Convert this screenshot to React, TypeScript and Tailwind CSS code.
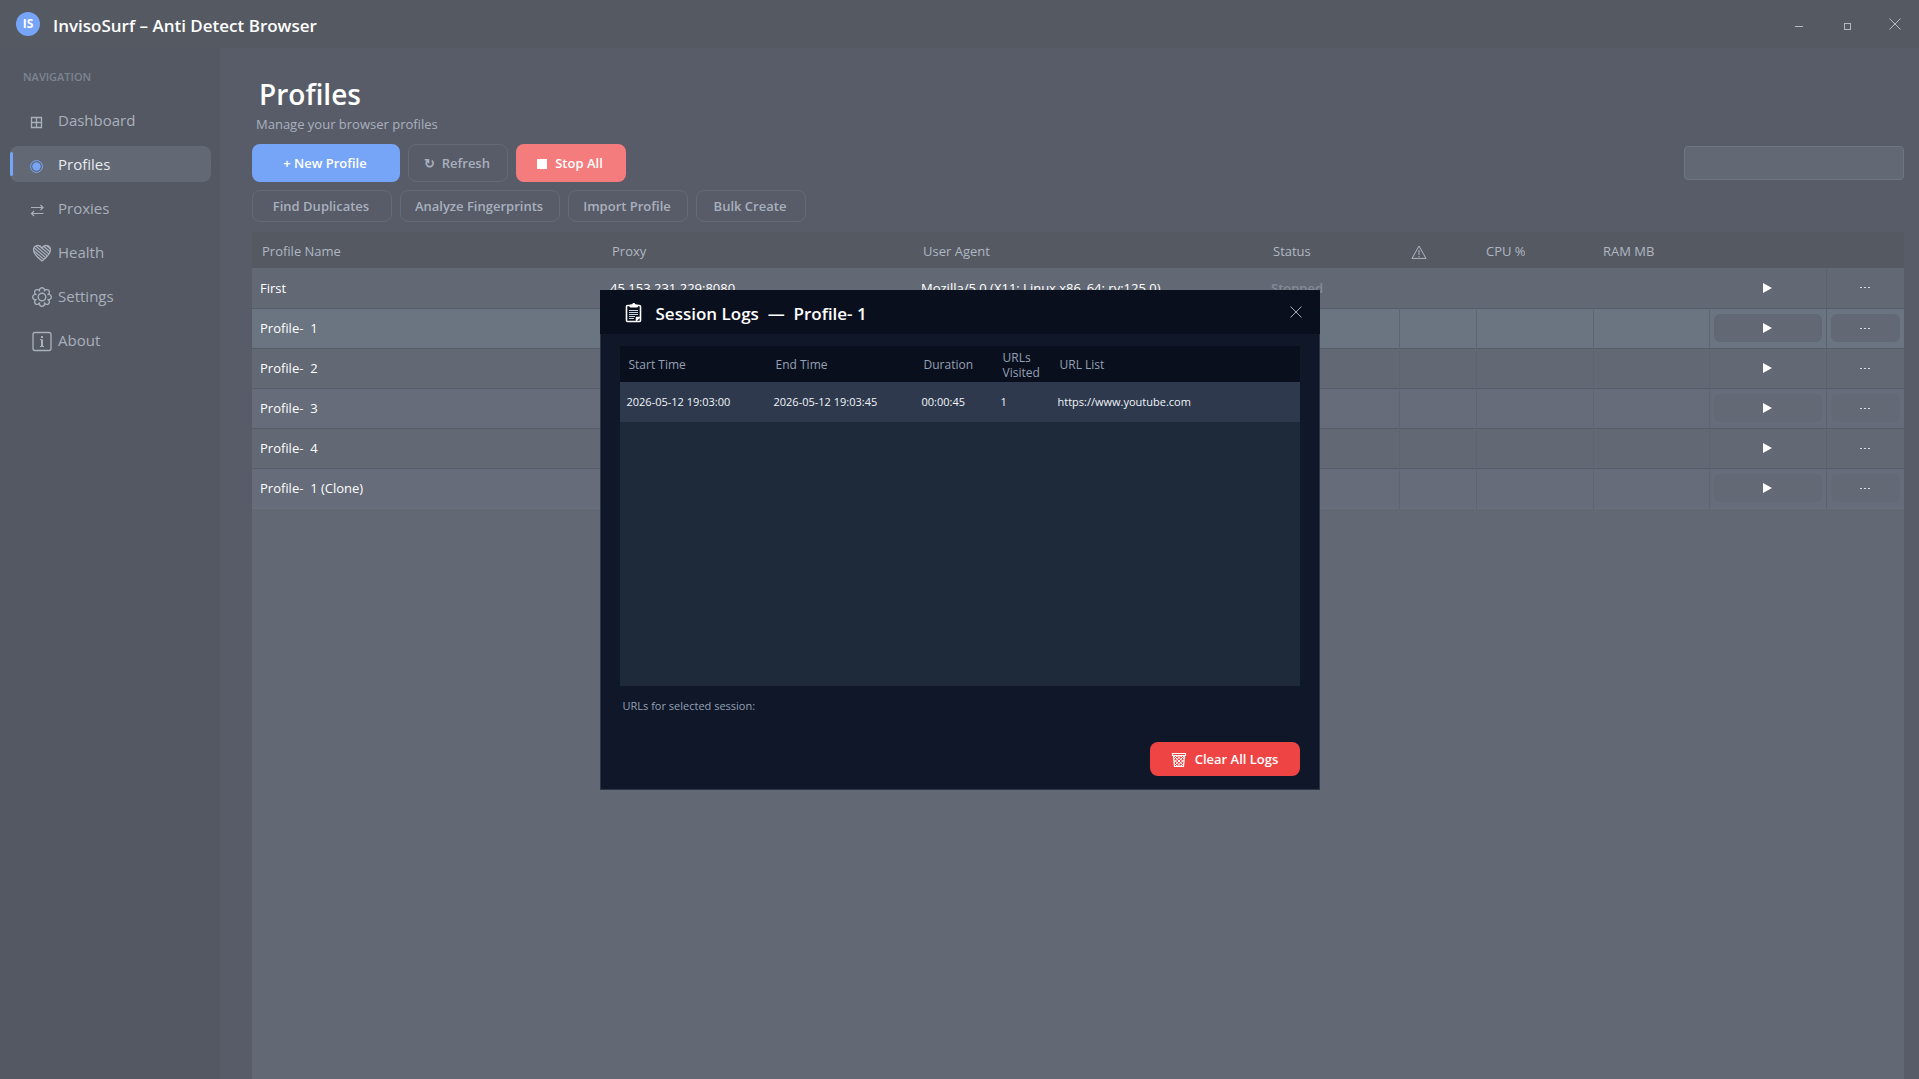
import React from "react";

const font = "font-['Open_Sans','Noto_Sans',sans-serif]";

const navItems = [
  { label: "Dashboard", icon: <GridIcon /> },
  { label: "Profiles", icon: <TargetIcon />, active: true },
  { label: "Proxies", icon: <SwapIcon /> },
  { label: "Health", icon: <HeartIcon /> },
  { label: "Settings", icon: <GearIcon /> },
  { label: "About", icon: <InfoIcon /> },
];

const profiles = [
  { name: "First", proxy: "45.153.231.229:8080", agent: "Mozilla/5.0 (X11; Linux x86_64; rv:125.0)", status: "Stopped" },
  { name: "Profile-  1", proxy: "", agent: "", status: "", selected: true },
  { name: "Profile-  2", proxy: "", agent: "", status: "" },
  { name: "Profile-  3", proxy: "", agent: "", status: "" },
  { name: "Profile-  4", proxy: "", agent: "", status: "" },
  { name: "Profile-  1 (Clone)", proxy: "", agent: "", status: "" },
];

function GridIcon() {
  return (
    <svg viewBox="0 0 24 24" className="size-6" fill="none" stroke="currentColor" strokeWidth="1.300">
      <path d="M6.500 9.500h10v10h-10zM11.500 9.500v10M6.500 14.500h10" />
    </svg>
  );
}

function TargetIcon() {
  return (
    <svg viewBox="0 0 24 24" className="size-6" fill="none" stroke="currentColor">
      <circle cx="11.500" cy="14.500" r="6" />
      <circle cx="11.500" cy="14.500" r="4.200" fill="currentColor" stroke="none" />
    </svg>
  );
}

function SwapIcon() {
  return (
    <svg viewBox="0 0 24 24" className="size-6" fill="none" stroke="currentColor" strokeWidth="1.200">
      <path d="M6 11.500h12M15.500 9l2.500 2.500-2.500 2.500M18.500 17.500h-12M9 15l-2.500 2.500L9 20" />
    </svg>
  );
}

function HeartIcon() {
  const heart = "M17 21C12 17 8.500 14 8.500 10 8.500 5 14.800 4 17 8c2.200-4 8.500-3 8.500 2 0 4-3.500 7-8.500 11z";
  return (
    <svg viewBox="0 0 24 24" className="size-6 overflow-visible" fill="none" stroke="currentColor">
      <defs>
        <clipPath id="heart">
          <path d={heart} />
        </clipPath>
      </defs>
      <path d={heart} strokeWidth="1.300" />
      <path
        clipPath="url(#heart)"
        d="M2 5l20 17M4 3.500l20 17M6 2l20 17M8 .5l20 17M10-1l20 17M0 6.500l20 17M12-2.500l20 17"
        strokeWidth="1.200"
      />
    </svg>
  );
}

function GearIcon() {
  return (
    <svg viewBox="0 0 24 24" className="size-6 overflow-visible" fill="none" stroke="currentColor" strokeWidth="1.400">
      <g transform="translate(17 13)">
        <path d="M-2.300-5.500a2.600 2.600 0 1 1 4.600 0a2.600 2.600 0 1 1 3.200 3.200a2.600 2.600 0 1 1 0 4.600a2.600 2.600 0 1 1-3.200 3.200a2.600 2.600 0 1 1-4.600 0a2.600 2.600 0 1 1-3.200-3.200a2.600 2.600 0 1 1 0-4.600a2.600 2.600 0 1 1 3.200-3.200z" />
        <circle r="3.800" />
      </g>
    </svg>
  );
}

function InfoIcon() {
  return (
    <svg viewBox="0 0 24 24" className="size-6 overflow-visible" fill="none" stroke="currentColor" strokeWidth="1.300">
      <rect x="8" y="4.500" width="18" height="18" rx="2" />
      <path d="M17 11.500v7M17 8v2" strokeWidth="2" />
      <path d="M15 11.700h2M15 18.500h4" strokeWidth="1" />
    </svg>
  );
}

function CloseIcon() {
  return (
    <svg viewBox="0 0 12 12" className="size-3" fill="none" stroke="currentColor">
      <path d="M.5.5l11 11M11.500.5l-11 11" />
    </svg>
  );
}

function ClipboardIcon() {
  return (
    <svg viewBox="0 0 18 20" className="h-5 w-[18px] overflow-visible" fill="none" stroke="#fff">
      <g transform="translate(1 1)">
        <rect x="1.500" y="2.500" width="14" height="16" rx="1" strokeWidth="1.600" />
        <path d="M5 4V2h2l1-1.500h1.500l1 1.500h2v2z" fill="#fff" />
        <path d="M4 7.500h9M4 9.500h9M4 11.500h9M4 13.500h6M4 15.500h5" stroke="#cbd5e1" />
        <path d="M15.500 14l-4.500 4.500V14z" fill="#fff" strokeWidth=".5" />
      </g>
    </svg>
  );
}

function TrashIcon() {
  return (
    <svg viewBox="0 0 16 16" className="size-4" fill="none" stroke="currentColor">
      <path d="M1.500 1.500h13v2h-13zM2.500 3.500l1 11h9l1-11" strokeWidth="1.200" />
      <path d="M3 4l9.500 9.500M6.500 4l6.500 6.500M3.500 8l6 6M3.500 11.500l2.500 2.500M10 4l3 3M13 4l-9.500 9.500M9.500 4L3 10.500M12.500 8l-6 6M12.500 11.500L10 14M6 4L3 7" strokeWidth="1" />
    </svg>
  );
}

function ToolButton({ children, className }: { children: React.ReactNode; className: string }) {
  return (
    <button className={`flex items-center justify-center rounded-lg pt-0.5 pr-0.5 text-[13px] font-semibold whitespace-pre ${className}`}>
      {children}
    </button>
  );
}

const ghost = "border border-[#656a77] text-[#a9b0bd]";

export default function App() {
  return (
    <div className={`relative flex h-screen flex-col overflow-hidden bg-[#585c69] text-white ${font}`}>
      <header className="flex h-12 shrink-0 items-center bg-[#555962] pr-[18px] pl-4">
        <span className="flex size-6 items-center justify-center rounded-full bg-[#76a5f8] text-xs font-bold">IS</span>
        <h1 className="ml-[13px] pt-1 text-[17px] font-semibold">InvisoSurf – Anti Detect Browser</h1>
        <div className="ml-auto flex items-center gap-9 text-[#b3b8c2]">
          <button aria-label="Minimize" className="flex size-3 items-center justify-center pt-1">
            <span className="h-px w-2 bg-current" />
          </button>
          <button aria-label="Maximize" className="flex size-3 items-center justify-center pt-1">
            <span className="size-[7px] shrink-0 border border-current" />
          </button>
          <button aria-label="Close">
            <CloseIcon />
          </button>
        </div>
      </header>

      <div className="flex min-h-0 flex-1">
        <aside className="w-[220px] shrink-0 bg-[#545862] pt-5">
          <h2 className="mb-4 pl-[23px] text-[11px] leading-[18px] font-semibold text-[#7e8491]">NAVIGATION</h2>
          <nav className="flex flex-col gap-2 pr-[9px] pl-[10px]">
            {navItems.map((item) => (
              <a
                key={item.label}
                href="#"
                className={`relative flex h-9 items-center rounded-lg text-[15px] ${item.active ? "bg-[#626874] text-[#e8ebef]" : "text-[#a9b0bd]"}`}
              >
                {item.active && <span className="absolute top-1.5 left-0 h-6 w-[3px] rounded-sm bg-[#76a5f8]" />}
                <span className={`ml-[15px] ${item.active ? "text-[#76a5f8]" : ""}`}>{item.icon}</span>
                <span className="ml-[9px]">{item.label}</span>
              </a>
            ))}
          </nav>
        </aside>

        <main className="flex min-w-0 flex-1 flex-col pt-6 pr-[15px] pl-8">
          <h2 className="pt-0.5 pl-[7px] text-[28px] leading-10 font-semibold">Profiles</h2>
          <p className="pl-1 text-[13px] leading-5 text-[#a9b0bd]">Manage your browser profiles</p>

          <div className="mt-[10px] flex items-center gap-2">
            <ToolButton className="h-[38px] w-[148px] bg-[#76a5f8]">+ New Profile</ToolButton>
            <ToolButton className={`h-[38px] w-[100px] ${ghost}`}>↻  Refresh</ToolButton>
            <ToolButton className="h-[38px] w-[110px] bg-[#f47c7c]">
              <span className="mr-2 size-[10px] bg-white" />
              Stop All
            </ToolButton>
            <input aria-label="Search profiles" className="ml-auto h-[34px] w-[220px] rounded border border-[#6f7683] bg-[#626874] px-2 text-sm" />
          </div>
          <div className="mt-2 flex gap-2">
            <ToolButton className={`h-8 w-[140px] ${ghost}`}>Find Duplicates</ToolButton>
            <ToolButton className={`h-8 w-[160px] ${ghost}`}>Analyze Fingerprints</ToolButton>
            <ToolButton className={`h-8 w-[120px] ${ghost}`}>Import Profile</ToolButton>
            <ToolButton className={`h-8 w-[110px] ${ghost}`}>Bulk Create</ToolButton>
          </div>

          <div className="mt-[10px] min-h-0 flex-1 bg-[#626874]">
            <table className="w-full table-fixed border-collapse text-left text-[13px]">
              <colgroup>
                <col />
                <col className="w-[311px]" />
                <col className="w-[350px]" />
                <col className="w-[136px]" />
                <col className="w-[77px]" />
                <col className="w-[117px]" />
                <col className="w-[116px]" />
                <col className="w-[117px]" />
                <col className="w-[78px]" />
              </colgroup>
              <thead>
                <tr className="h-9 bg-[#555962] text-[#b0b7c3]">
                  <th className="px-[10px] pt-[3px] font-normal">Profile Name</th>
                  <th className="px-[10px] pt-[3px] font-normal">Proxy</th>
                  <th className="px-[10px] pt-[3px] font-normal">User Agent</th>
                  <th className="px-[10px] pt-[3px] font-normal">Status</th>
                  <th className="px-3 pt-[3px] font-normal">
                    <svg viewBox="0 0 16 14" className="h-[14px] w-4" fill="none" stroke="currentColor" role="img" aria-label="Warnings">
                      <path d="M8 1L15 13.400H1zM8 5v5M8 11v1" />
                    </svg>
                  </th>
                  <th className="px-[10px] pt-[3px] font-normal">CPU %</th>
                  <th className="px-[10px] pt-[3px] font-normal">RAM MB</th>
                  <th aria-label="Run" />
                  <th aria-label="More" />
                </tr>
              </thead>
              <tbody>
                {profiles.map((p, i) => {
                  const row = p.selected ? "bg-[#6b7581]" : i % 2 ? "bg-[#666c79]" : "bg-[#626874]";
                  const cell = i === 0 ? "px-2 pt-0.5" : "border-r border-[#5e6470] px-2 pt-0.5";
                  const action = p.selected ? "bg-[#626874]" : i % 2 ? "bg-[#636975]" : "";
                  return (
                    <tr key={p.name} className={`h-10 border-b border-[#565c68] whitespace-pre last:border-b-[#69717d] ${row}`}>
                      <td className={cell}>{p.name}</td>
                      <td className={cell}>{p.proxy}</td>
                      <td className={cell}>{p.agent}</td>
                      <td className={`${cell} font-semibold text-[#858b97]`}>{p.status}</td>
                      <td className={cell} />
                      <td className={cell} />
                      <td className={cell} />
                      <td className="border-r border-[#5b616d] px-1">
                        <button aria-label={`Start ${p.name}`} className={`flex h-7 w-full items-center justify-center rounded-md ${action}`}>
                          <svg viewBox="0 0 9 10" className="h-[10px] w-[9px]" fill="#fff">
                            <path d="M0 0l9 5-9 5z" />
                          </svg>
                        </button>
                      </td>
                      <td className="px-1">
                        <button aria-label={`More actions for ${p.name}`} className={`flex h-7 w-full items-center justify-center gap-0.5 rounded-md ${action}`}>
                          <span className="h-px w-0.5 bg-[#d9dce1]" />
                          <span className="h-px w-0.5 bg-[#d9dce1]" />
                          <span className="h-px w-0.5 bg-[#d9dce1]" />
                        </button>
                      </td>
                    </tr>
                  );
                })}
              </tbody>
            </table>
          </div>
        </main>
      </div>

      <div className="absolute inset-0 flex items-center justify-center">
        <section role="dialog" aria-labelledby="logs-title" className="flex h-[500px] w-[720px] flex-col border border-t-0 border-[#2b3648] bg-[#0f1729]">
          <div className="-mx-px flex h-11 shrink-0 items-center bg-[#0a0f1e] pr-[18px] pl-6">
            <ClipboardIcon />
            <h2 id="logs-title" className="ml-[14px] pt-1 text-[17px] font-semibold whitespace-pre">Session Logs  —  Profile- 1</h2>
            <button aria-label="Close logs" className="ml-auto text-[#a3a9b5]">
              <CloseIcon />
            </button>
          </div>
          <div className="mx-[19px] mt-3 h-[340px] bg-[#1e293a]">
            <table className="w-full table-fixed text-left text-[11px] leading-[15px]">
              <colgroup>
                <col className="w-[147px]" />
                <col className="w-[148px]" />
                <col className="w-[79px]" />
                <col className="w-[57px]" />
                <col />
              </colgroup>
              <thead>
                <tr className="h-9 bg-[#0a0f1e] text-xs leading-[15px] text-[#94a0b4]">
                  <th className="pt-0.5 pl-[9px] font-normal">Start Time</th>
                  <th className="pt-0.5 pl-[9px] font-normal">End Time</th>
                  <th className="pt-0.5 pl-[9px] font-normal">Duration</th>
                  <th className="pt-0.5 pl-[9px] font-normal">URLs Visited</th>
                  <th className="pt-0.5 pl-[9px] font-normal">URL List</th>
                </tr>
              </thead>
              <tbody>
                <tr className="h-10 bg-[#2e394d] text-[#f1f5f9]">
                  <td className="pl-[7px]">2026-05-12 19:03:00</td>
                  <td className="pl-[7px]">2026-05-12 19:03:45</td>
                  <td className="pl-[7px]">00:00:45</td>
                  <td className="pl-[7px]">1</td>
                  <td className="pl-[7px]">https://www.youtube.com</td>
                </tr>
              </tbody>
            </table>
          </div>
          <p className="mt-3 ml-[22px] text-[11px] leading-4 text-[#94a0b4]">URLs for selected session:</p>
          <button className="mt-auto mr-[19px] mb-[13px] flex h-[34px] w-[150px] items-center justify-center gap-2 self-end rounded-lg bg-[#ef4444] pt-0.5 text-[13px] font-semibold">
            <TrashIcon />
            Clear All Logs
          </button>
        </section>
      </div>
    </div>
  );
}
